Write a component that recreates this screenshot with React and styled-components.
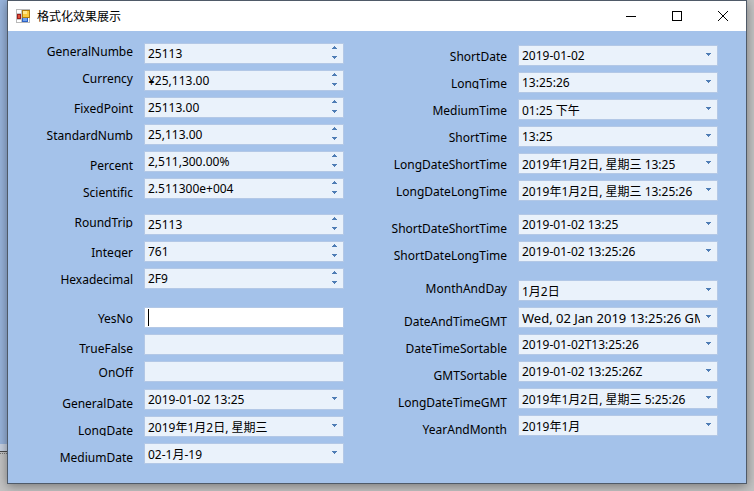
import { useState } from "react";
import styled, { createGlobalStyle, css } from "styled-components";

const numbers = [
  { label: "GeneralNumbe", value: "25113", kind: "spin", align: "start" },
  { label: "Currency", value: "¥25,113.00", kind: "spin", align: "start" },
  { label: "FixedPoint", value: "25113.00", kind: "spin", align: "center" },
  { label: "StandardNumb", value: "25,113.00", kind: "spin", align: "center" },
  { label: "Percent", value: "2,511,300.00%", kind: "spin", align: "end" },
  { label: "Scientific", value: "2.511300e+004", kind: "spin", align: "end" },
];

const integers = [
  { label: "RoundTrip", value: "25113", kind: "spin", align: "start", clipped: true },
  { label: "Integer", value: "761", kind: "spin", align: "center", clipped: true },
  { label: "Hexadecimal", value: "2F9", kind: "spin", align: "center" },
];

const flags = [
  { label: "YesNo", value: "", kind: "text", align: "center", active: true },
  { label: "TrueFalse", value: "", kind: "text", align: "end" },
  { label: "OnOff", value: "", kind: "text", align: "center" },
];

const dates = [
  { label: "GeneralDate", value: "2019-01-02 13:25", kind: "date", align: "end" },
  { label: "LongDate", value: "2019年1月2日, 星期三", kind: "date", align: "end", clipped: true },
  { label: "MediumDate", value: "02-1月-19", kind: "date", align: "end" },
];

const times = [
  { label: "ShortDate", value: "2019-01-02", kind: "date", align: "center" },
  { label: "LongTime", value: "13:25:26", kind: "date", align: "center", clipped: true },
  { label: "MediumTime", value: "01:25 下午", kind: "date", align: "center" },
  { label: "ShortTime", value: "13:25", kind: "date", align: "center" },
  { label: "LongDateShortTime", value: "2019年1月2日, 星期三 13:25", kind: "date", align: "center" },
  { label: "LongDateLongTime", value: "2019年1月2日, 星期三 13:25:26", kind: "date", align: "center" },
];

const shortDates = [
  { label: "ShortDateShortTime", value: "2019-01-02 13:25", kind: "date", align: "end" },
  { label: "ShortDateLongTime", value: "2019-01-02 13:25:26", kind: "date", align: "end" },
];

const sortable = [
  { label: "MonthAndDay", value: "1月2日", kind: "date", align: "start" },
  { label: "DateAndTimeGMT", value: "Wed, 02 Jan 2019 13:25:26 GMT", kind: "date", align: "end", large: true },
  { label: "DateTimeSortable", value: "2019-01-02T13:25:26", kind: "date", align: "end" },
  { label: "GMTSortable", value: "2019-01-02 13:25:26Z", kind: "date", align: "end" },
  { label: "LongDateTimeGMT", value: "2019年1月2日, 星期三 5:25:26", kind: "date", align: "end" },
  { label: "YearAndMonth", value: "2019年1月", kind: "date", align: "end" },
];

const Arrow = ({ up }) => (
  <svg width="5" height="3" viewBox="0 0 5 3" fill="#4f7db5" shapeRendering="crispEdges">
    <path d={up ? "M2 0h1v1h1v1h1v1H0V2h1V1h1z" : "M0 0h5v1H4v1H3v1H2V2H1V1H0z"} />
  </svg>
);

const Field = ({ label, value, kind, align, clipped, active, large }) => {
  const [text, setText] = useState(value);
  return (
    <Row $align={align}>
      <Label htmlFor={label} $clipped={clipped}>
        {label}
      </Label>
      <Box $active={active}>
        {active && <Caret />}
        <Input
          id={label}
          value={text}
          onChange={(e) => setText(e.target.value)}
          $large={large}
        />
        {kind === "spin" && (
          <Spinner>
            <SpinButton type="button" aria-label={`${label} up`}>
              <Arrow up />
            </SpinButton>
            <SpinButton type="button" aria-label={`${label} down`}>
              <Arrow />
            </SpinButton>
          </Spinner>
        )}
        {kind === "date" && (
          <DropButton type="button" aria-label={`${label} open`}>
            <Arrow />
          </DropButton>
        )}
      </Box>
    </Row>
  );
};

const Fields = ({ rows, space }) => (
  <Group $space={space}>
    {rows.map((row) => (
      <Field key={row.label} {...row} />
    ))}
  </Group>
);

const FormIcon = () => (
  <svg width="15" height="15" viewBox="0 0 15 15" shapeRendering="crispEdges">
    <path d="M.5 .5h13v13H.5z" fill="#fff" stroke="#b9b9b9" />
    <path d="M1 4.5h4M1 10.5h4M5.5 1v12M11.5 9v4" stroke="#c4c4c4" fill="none" />
    <path d="M1 5h4v5H1z" fill="#9c1c1c" />
    <path d="M2 6h2v3H2z" fill="#e0503a" />
    <path d="M6 1h8v8H6z" fill="#b07c10" />
    <path d="M7 2h6v6H7z" fill="#fbcb3f" />
    <path d="M7 2h4v3H7z" fill="#ffe88a" />
    <path d="M6 9h6v4H6z" fill="#2e62c4" />
    <path d="M7 9h4v3H7z" fill="#6ea2f0" />
  </svg>
);

export default function App() {
  return (
    <Desktop>
      <GlobalStyle />
      <Behind>
        <BehindForm />
        <BehindEdge />
        <BehindDots />
      </Behind>
      <Window>
        <TitleBar>
          <FormIcon />
          <Title>格式化效果展示</Title>
          <WindowButton type="button" aria-label="Minimize">
            <svg width="10" height="11" stroke="#000" shapeRendering="crispEdges">
              <path d="M0 5.5h10" />
            </svg>
          </WindowButton>
          <WindowButton type="button" aria-label="Maximize">
            <svg width="10" height="11" stroke="#000" fill="none" shapeRendering="crispEdges">
              <path d="M.5 .5h9v9h-9z" />
            </svg>
          </WindowButton>
          <WindowButton type="button" aria-label="Close">
            <svg width="10" height="11" stroke="#000">
              <path d="M0 0l10 10M10 0l-10 10" />
            </svg>
          </WindowButton>
        </TitleBar>
        <Form>
          <Column>
            <Fields rows={numbers} />
            <Fields rows={integers} space={15} />
            <Fields rows={flags} space={18} />
            <Fields rows={dates} space={7} />
          </Column>
          <Column $low>
            <Fields rows={times} />
            <Fields rows={shortDates} space={13} />
            <Fields rows={sortable} space={18} />
          </Column>
        </Form>
      </Window>
    </Desktop>
  );
}

const GlobalStyle = createGlobalStyle`
  * {
    box-sizing: border-box;
  }
  body {
    margin: 0;
    font-family: "Noto Sans", "Noto Sans CJK SC", sans-serif;
    font-size: 12px;
    color: #000;
  }
  button, input {
    font: inherit;
    color: inherit;
    border: 0;
    padding: 0;
    background: none;
  }
`;

const Desktop = styled.div`
  display: grid;
  grid-template-columns: 7px 1fr;
  min-height: 100vh;
  padding: 0 7px 7px 0;
  background: #c3c3c3;
`;

const Behind = styled.div`
  display: flex;
  flex-direction: column;
`;

const BehindForm = styled.div`
  flex: 1;
  background: #98b4dc;
`;

const BehindEdge = styled.div`
  height: 8px;
  border-bottom: 1px solid #4a4a4a;
  background: #c8d2e2;
`;

const BehindDots = styled.div`
  height: 31px;
  margin-top: 1px;
  border-top: 1px dotted #777;
`;

const Window = styled.main`
  display: flex;
  flex-direction: column;
  border: 1px solid #4f5a68;
  box-shadow: 0 2px 10px rgba(0, 0, 0, 0.4);
  background: #a4c2ea;
`;

const TitleBar = styled.header`
  display: flex;
  align-items: center;
  height: 30px;
  padding-left: 8px;
  background: #fff;
`;

const Title = styled.h1`
  flex: 1;
  margin: 0 0 0 6px;
  font-size: 12px;
  font-weight: 400;
`;

const WindowButton = styled.button`
  display: flex;
  align-items: center;
  justify-content: center;
  width: 46px;
  height: 30px;
`;

const Form = styled.form`
  display: grid;
  grid-template-columns: 336fr 374fr;
  flex: 1;
  padding: 12px 28px 12px 0;
`;

const Column = styled.div`
  padding-top: ${(props) => (props.$low ? 2 : 0)}px;
`;

const Group = styled.div`
  display: flex;
  flex-direction: column;
  gap: 6px;
  margin-top: ${(props) => props.$space || 0}px;
`;

const Row = styled.div`
  display: grid;
  grid-template-columns: 1fr 200px;
  column-gap: 11px;
  align-items: ${(props) => props.$align};
`;

const Label = styled.label`
  margin: 1px 0 -1px;
  line-height: 15px;
  text-align: right;
  white-space: nowrap;
  ${(props) =>
    props.$clipped &&
    css`
      clip-path: inset(0 0 2px 0);
    `}
`;

const Box = styled.div`
  display: flex;
  height: 21px;
  padding-left: 3px;
  border: 1px solid #b3c8e6;
  background: ${(props) => (props.$active ? "#fff" : "#eaf2fb")};
`;

const Caret = styled.span`
  width: 1px;
  height: 17px;
  margin-top: 1px;
  background: #000;
`;

const Input = styled.input`
  flex: 1;
  min-width: 0;
  font-size: ${(props) => (props.$large ? 13 : 12)}px;
  outline: none;
`;

const Spinner = styled.div`
  display: flex;
  flex-direction: column;
  gap: 2px;
  width: 17px;
  padding-bottom: 2px;
`;

const SpinButton = styled.button`
  display: flex;
  flex: 1;
  align-items: center;
  justify-content: center;
`;

const DropButton = styled.button`
  display: flex;
  align-items: center;
  justify-content: center;
  width: 17px;
  padding-bottom: 2px;
`;
